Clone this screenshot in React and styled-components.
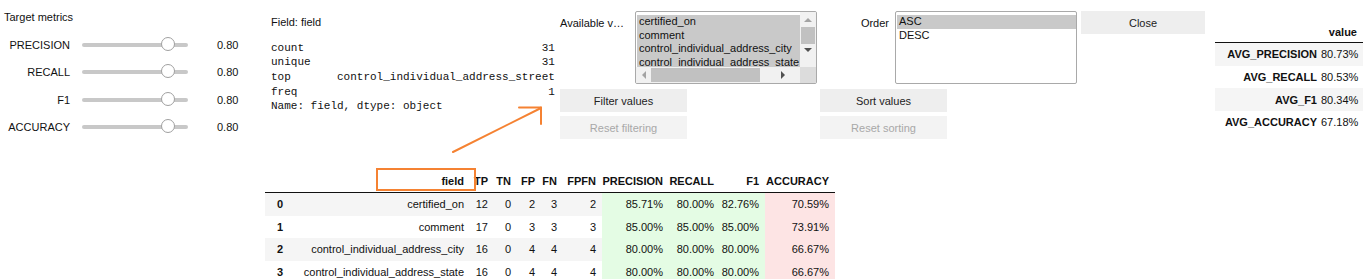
import React from 'react';
import styled, { createGlobalStyle } from 'styled-components';

const metrics = ['PRECISION', 'RECALL', 'F1', 'ACCURACY'];

const describeLines = [
  'count                                    31',
  'unique                                   31',
  'top       control_individual_address_street',
  'freq                                      1',
  'Name: field, dtype: object',
];

const fieldValues = [
  'certified_on',
  'comment',
  'control_individual_address_city',
  'control_individual_address_state',
];

const stats = [
  ['AVG_PRECISION', '80.73%'],
  ['AVG_RECALL', '80.53%'],
  ['AVG_F1', '80.34%'],
  ['AVG_ACCURACY', '67.18%'],
];

const columns = [
  { key: 'idx', label: '', width: 25 },
  { key: 'field', label: 'field', width: 180 },
  { key: 'TP', label: 'TP', width: 24 },
  { key: 'TN', label: 'TN', width: 23 },
  { key: 'FP', label: 'FP', width: 24 },
  { key: 'FN', label: 'FN', width: 22 },
  { key: 'FPFN', label: 'FPFN', width: 39 },
  { key: 'PRECISION', label: 'PRECISION', width: 67, tone: 'good' },
  { key: 'RECALL', label: 'RECALL', width: 51, tone: 'good' },
  { key: 'F1', label: 'F1', width: 45, tone: 'good' },
  { key: 'ACCURACY', label: 'ACCURACY', width: 70, tone: 'bad' },
];

const rows = [
  ['0', 'certified_on', 12, 0, 2, 3, 2, '85.71%', '80.00%', '82.76%', '70.59%'],
  ['1', 'comment', 17, 0, 3, 3, 3, '85.00%', '85.00%', '85.00%', '73.91%'],
  ['2', 'control_individual_address_city', 16, 0, 4, 4, 4, '80.00%', '80.00%', '80.00%', '66.67%'],
  ['3', 'control_individual_address_state', 16, 0, 4, 4, 4, '80.00%', '80.00%', '80.00%', '66.67%'],
];

const GlobalStyle = createGlobalStyle`
  html, body {
    margin: 0;
    padding: 0;
    background: #ffffff;
  }
`;

const Page = styled.div`
  position: relative;
  display: flex;
  width: 1364px;
  height: 279px;
  overflow: hidden;
  font-family: "Liberation Sans", Arial, sans-serif;
  font-size: 11px;
  color: #111;
`;

const LeftColumn = styled.div`
  width: 265px;
  flex-shrink: 0;
  padding: 10px 0 0 4px;
  box-sizing: border-box;
`;

const Title = styled.div`
  line-height: 14px;
  height: 14px;
  margin-bottom: 7px;
`;

const SliderRow = styled.div`
  display: flex;
  align-items: center;
  height: 27.5px;
`;

const SliderLabel = styled.div`
  width: 66px;
  text-align: right;
`;

const Track = styled.div`
  position: relative;
  width: 106px;
  height: 4px;
  margin-left: 12px;
  background: #c8c8c8;
  border-radius: 2px;
`;

const Thumb = styled.div`
  position: absolute;
  left: 79px;
  top: -6px;
  width: 14px;
  height: 14px;
  box-sizing: border-box;
  border: 1px solid #a0a0a0;
  border-radius: 50%;
  background: #fff;
`;

const SliderValue = styled.div`
  margin-left: 29px;
`;

const Main = styled.div`
  display: flex;
  flex-direction: column;
  flex: 1;
  min-width: 0;
`;

const TopRow = styled.div`
  display: flex;
  flex-shrink: 0;
  height: 170px;
`;

const FieldPanel = styled.div`
  width: 290px;
  flex-shrink: 0;
  padding: 15px 0 0 6px;
  box-sizing: border-box;
`;

const FieldTitle = styled.div`
  line-height: 14px;
`;

const Describe = styled.pre`
  margin: 11.5px 0 0;
  font-family: "Liberation Mono", "Courier New", monospace;
  font-size: 11px;
  line-height: 14.7px;
  color: #111;
`;

const ControlPanel = styled.div`
  width: ${({ $width }) => $width}px;
  flex-shrink: 0;
  padding-top: 11px;
  box-sizing: border-box;
`;

const ControlRow = styled.div`
  display: flex;
`;

const ControlLabel = styled.div`
  width: ${({ $right }) => ($right ? 75 : 80)}px;
  flex-shrink: 0;
  box-sizing: border-box;
  padding: 5px ${({ $right }) => ($right ? '6px' : '10px')} 0 ${({ $right }) => ($right ? '0' : '5px')};
  line-height: 14px;
  text-align: ${({ $right }) => ($right ? 'right' : 'left')};
  white-space: nowrap;
  overflow: hidden;
  text-overflow: ellipsis;
`;

const ListFrame = styled.div`
  display: grid;
  flex-shrink: 0;
  grid-template-columns: 1fr ${({ $scroll }) => ($scroll ? '16px' : '0')};
  grid-template-rows: 1fr ${({ $scroll }) => ($scroll ? '16px' : '0')};
  width: 182px;
  height: 73px;
  box-sizing: border-box;
  border: 1px solid #a9a9a9;
  border-radius: 2px;
  background: #fff;
  overflow: hidden;
`;

const ListItems = styled.div`
  padding: 3px 0 0 1px;
  overflow: hidden;
`;

const ListItem = styled.div`
  line-height: 13.5px;
  padding-left: 2px;
  white-space: nowrap;
  background: ${({ $selected }) => ($selected ? '#c9c9c9' : 'transparent')};
  color: #111;
`;

const VScroll = styled.div`
  display: flex;
  flex-direction: column;
  align-items: center;
  background: #f1f1f1;
`;

const HScroll = styled.div`
  display: flex;
  align-items: center;
  background: #f1f1f1;
`;

const ScrollArrow = styled.div`
  width: 0;
  height: 0;
  flex-shrink: 0;
  border-style: solid;
  ${({ $dir, $dim }) => {
    const c = $dim ? '#a3a3a3' : '#505050';
    if ($dir === 'up') return `border-width: 0 4px 4px 4px; border-color: transparent transparent ${c} transparent; margin: 6px 0 5px;`;
    if ($dir === 'down') return `border-width: 4px 4px 0 4px; border-color: ${c} transparent transparent transparent; margin: 4px 0 0;`;
    if ($dir === 'left') return `border-width: 4px 4px 4px 0; border-color: transparent ${c} transparent transparent; margin: 0 5px 0 6px;`;
    return `border-width: 4px 0 4px 4px; border-color: transparent transparent transparent ${c}; margin: 0 6px 0 21px;`;
  }}
`;

const VThumb = styled.div`
  width: 14px;
  height: 17px;
  background: #c1c1c1;
`;

const HThumb = styled.div`
  width: 109px;
  height: 14px;
  background: #c1c1c1;
`;

const Corner = styled.div`
  background: #dcdcdc;
`;

const ButtonStack = styled.div`
  display: flex;
  flex-direction: column;
  gap: 4px;
  margin-top: 5px;
  padding-left: ${({ $inset }) => $inset}px;
`;

const Button = styled.button`
  width: 127px;
  height: 23px;
  margin: 0;
  padding: 0;
  border: none;
  font-family: "Liberation Sans", Arial, sans-serif;
  font-size: 11px;
  color: ${({ disabled }) => (disabled ? '#a8a8a8' : '#222')};
  background: ${({ disabled }) => (disabled ? '#f3f3f3' : '#eeeeee')};
`;

const CloseButton = styled(Button)`
  width: 124px;
  margin: 11px 0 0 1px;
`;

const StatsWrap = styled.div`
  flex-shrink: 0;
  margin: 21px 0 0 10px;
`;

const StatsTable = styled.table`
  border-collapse: collapse;
  table-layout: fixed;
  width: 148px;
  font-size: 11px;
`;

const StatsHead = styled.th`
  height: 21px;
  padding: 0 ${({ $tight }) => ($tight ? 4 : 6)}px 0 0;
  text-align: right;
  font-weight: bold;
  border-bottom: 1px solid #111;
`;

const StatsRow = styled.tr`
  background: ${({ $striped }) => ($striped ? '#f5f5f5' : '#fff')};
`;

const StatsKey = styled.th`
  height: 22.7px;
  padding: 0 4px 0 0;
  text-align: right;
  font-weight: bold;
  white-space: nowrap;
`;

const StatsValue = styled.td`
  padding: 0 6px 0 0;
  text-align: right;
  white-space: nowrap;
`;

const DataTable = styled.table`
  flex-shrink: 0;
  border-collapse: collapse;
  table-layout: fixed;
  width: 570px;
  font-size: 11px;
`;

const HeadCell = styled.th`
  height: 22px;
  padding: 0 6px 0 0;
  text-align: right;
  font-weight: bold;
  white-space: nowrap;
  border-bottom: 1px solid #111;
`;

const BodyRow = styled.tr`
  background: ${({ $striped }) => ($striped ? '#f5f5f5' : '#fff')};
`;

const IndexCell = styled.th`
  height: 22.5px;
  padding: 0 0 0 12px;
  text-align: left;
  font-weight: bold;
`;

const Cell = styled.td`
  padding: 0 6px 0 0;
  text-align: right;
  white-space: nowrap;
  overflow: hidden;
  background: ${({ $tone }) => ($tone === 'good' ? '#e4fce4' : $tone === 'bad' ? '#fde4e4' : 'transparent')};
`;

const Annotation = styled.svg`
  position: absolute;
  left: 0;
  top: 0;
  pointer-events: none;
`;

const HighlightBox = styled.div`
  position: absolute;
  left: 376px;
  top: 168px;
  width: 100px;
  height: 23px;
  box-sizing: border-box;
  border: 2px solid #f58232;
`;

const Slider = ({ label }) => (
  <SliderRow>
    <SliderLabel>{label}</SliderLabel>
    <Track>
      <Thumb />
    </Track>
    <SliderValue>0.80</SliderValue>
  </SliderRow>
);

const Listbox = ({ items, selected, scroll }) => (
  <ListFrame $scroll={scroll}>
    <ListItems>
      {items.map((item) => (
        <ListItem key={item} $selected={selected.includes(item)}>
          {item}
        </ListItem>
      ))}
    </ListItems>
    {scroll && (
      <>
        <VScroll>
          <ScrollArrow $dir="up" $dim />
          <VThumb />
          <ScrollArrow $dir="down" />
        </VScroll>
        <HScroll>
          <ScrollArrow $dir="left" $dim />
          <HThumb />
          <ScrollArrow $dir="right" />
        </HScroll>
        <Corner />
      </>
    )}
  </ListFrame>
);

const App = () => (
  <Page>
    <GlobalStyle />
    <LeftColumn>
      <Title>Target metrics</Title>
      {metrics.map((m) => (
        <Slider key={m} label={m} />
      ))}
    </LeftColumn>

    <Main>
      <TopRow>
        <FieldPanel>
          <FieldTitle>Field: field</FieldTitle>
          <Describe>{describeLines.join('\n')}</Describe>
        </FieldPanel>

        <ControlPanel $width={265}>
          <ControlRow>
            <ControlLabel>Available values</ControlLabel>
            <Listbox items={fieldValues} selected={fieldValues} scroll />
          </ControlRow>
          <ButtonStack $inset={5}>
            <Button>Filter values</Button>
            <Button disabled>Reset filtering</Button>
          </ButtonStack>
        </ControlPanel>

        <ControlPanel $width={260}>
          <ControlRow>
            <ControlLabel $right>Order</ControlLabel>
            <Listbox items={['ASC', 'DESC']} selected={['ASC']} />
          </ControlRow>
          <ButtonStack $inset={0}>
            <Button>Sort values</Button>
            <Button disabled>Reset sorting</Button>
          </ButtonStack>
        </ControlPanel>

        <div>
          <CloseButton>Close</CloseButton>
        </div>

        <StatsWrap>
          <StatsTable>
            <colgroup>
              <col style={{ width: 106 }} />
              <col style={{ width: 42 }} />
            </colgroup>
            <thead>
              <tr>
                <StatsHead $tight />
                <StatsHead>value</StatsHead>
              </tr>
            </thead>
            <tbody>
              {stats.map(([k, v], i) => (
                <StatsRow key={k} $striped={i % 2 === 0}>
                  <StatsKey>{k}</StatsKey>
                  <StatsValue>{v}</StatsValue>
                </StatsRow>
              ))}
            </tbody>
          </StatsTable>
        </StatsWrap>
      </TopRow>

      <DataTable>
        <colgroup>
          {columns.map((c) => (
            <col key={c.key} style={{ width: c.width }} />
          ))}
        </colgroup>
        <thead>
          <tr>
            {columns.map((c) => (
              <HeadCell key={c.key}>{c.label}</HeadCell>
            ))}
          </tr>
        </thead>
        <tbody>
          {rows.map((r, i) => (
            <BodyRow key={r[0]} $striped={i % 2 === 0}>
              <IndexCell>{r[0]}</IndexCell>
              {r.slice(1).map((v, j) => (
                <Cell key={columns[j + 1].key} $tone={columns[j + 1].tone}>
                  {v}
                </Cell>
              ))}
            </BodyRow>
          ))}
        </tbody>
      </DataTable>
    </Main>

    <HighlightBox />
    <Annotation width="1364" height="279" viewBox="0 0 1364 279">
      <g stroke="#f58232" strokeWidth="2" fill="none" strokeLinecap="round">
        <line x1="453" y1="152" x2="541" y2="108" />
        <line x1="519" y1="107.5" x2="541" y2="107.5" />
        <line x1="541" y1="107.5" x2="541" y2="124" />
      </g>
    </Annotation>
  </Page>
);

export default App;
